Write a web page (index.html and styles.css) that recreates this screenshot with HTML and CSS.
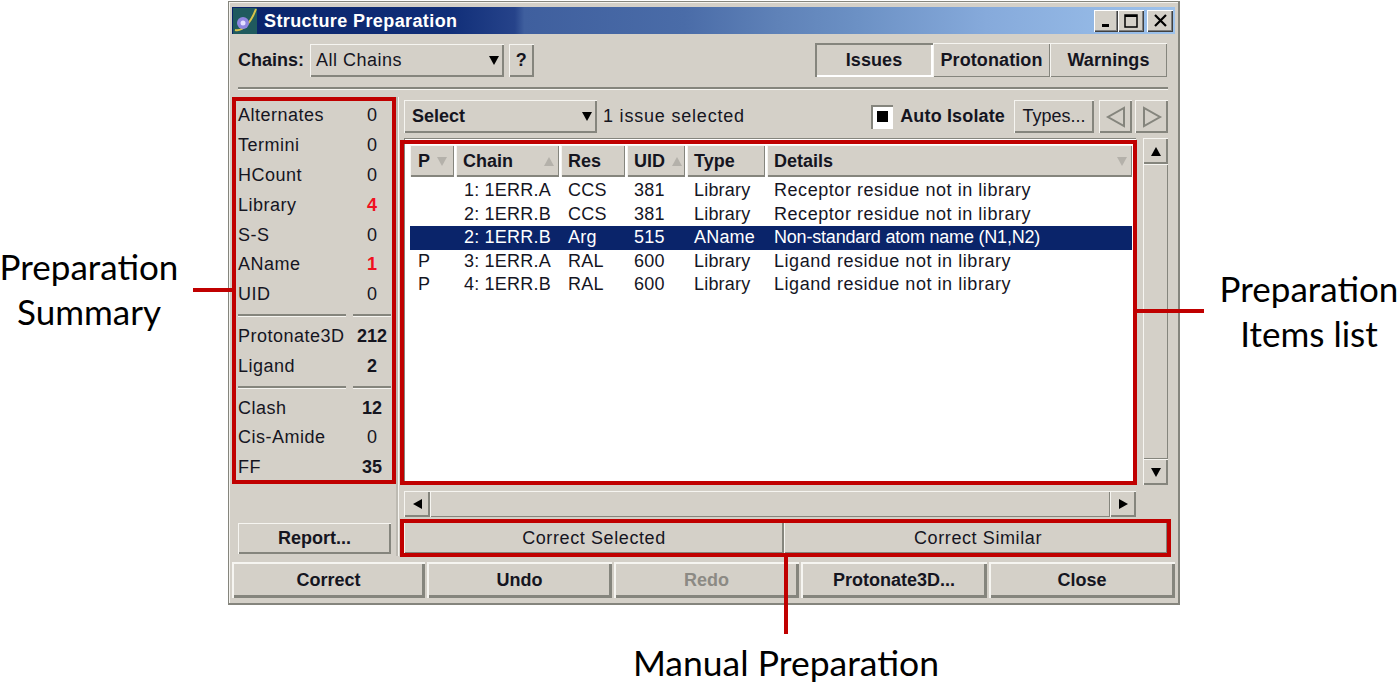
FILE: index.html
```html
<!DOCTYPE html>
<html lang="en">
<head>
  <meta charset="UTF-8">
  <title>Structure Preparation</title>
  <link rel="stylesheet" href="styles.css">
</head>
<body>
  <div class="page">
    <div class="window">
      <div class="titlebar">
        <svg class="app-icon" width="24" height="26" viewBox="0 0 24 26">
          <rect width="24" height="26" fill="#1f5a5e"/>
          <path d="M2 22 C10 24 18 14 23 1" stroke="#d9c24a" stroke-width="2" fill="none"/>
          <circle cx="10" cy="15" r="6" fill="#8f86e0"/>
          <circle cx="10" cy="15" r="2.5" fill="#e4e0ff"/>
        </svg>
        <span class="title">Structure Preparation</span>
        <div class="winbtns">
          <button class="winbtn"><svg width="13" height="13" viewBox="0 0 13 13"><rect x="2" y="10" width="7" height="3" fill="#000"/></svg></button>
          <button class="winbtn winbtn-max"><svg width="14" height="14" viewBox="0 0 14 14"><rect x="1" y="1" width="12" height="12" fill="none" stroke="#000" stroke-width="1.5"/><rect x="1" y="1" width="12" height="2" fill="#000"/></svg></button>
          <button class="winbtn winbtn-close"><svg width="13" height="13" viewBox="0 0 13 13"><path d="M1 1 L12 12 M12 1 L1 12" stroke="#000" stroke-width="2.2"/></svg></button>
        </div>
      </div>

      <div class="toprow">
        <span class="lbl-bold">Chains:</span>
        <div class="btn combo combo-chains"><span>All Chains</span><i class="arrow-down"></i></div>
        <button class="btn help">?</button>
        <div class="tabs">
          <button class="btn tab tab-on">Issues</button>
          <button class="btn tab">Protonation</button>
          <button class="btn tab">Warnings</button>
        </div>
      </div>
      <div class="sep sep-top"></div>

      <div class="main">
        <div class="left">
          <div class="summary">
            <div class="srow"><span>Alternates</span><span class="num">0</span></div>
            <div class="srow"><span>Termini</span><span class="num">0</span></div>
            <div class="srow"><span>HCount</span><span class="num">0</span></div>
            <div class="srow"><span>Library</span><span class="num red">4</span></div>
            <div class="srow"><span>S-S</span><span class="num">0</span></div>
            <div class="srow"><span>AName</span><span class="num red">1</span></div>
            <div class="srow"><span>UID</span><span class="num">0</span></div>
            <div class="ssep"><i></i><i></i></div>
            <div class="srow"><span>Protonate3D</span><span class="num strong">212</span></div>
            <div class="srow"><span>Ligand</span><span class="num strong">2</span></div>
            <div class="ssep"><i></i><i></i></div>
            <div class="srow"><span>Clash</span><span class="num strong">12</span></div>
            <div class="srow"><span>Cis-Amide</span><span class="num">0</span></div>
            <div class="srow"><span>FF</span><span class="num strong">35</span></div>
          </div>
          <button class="btn report">Report...</button>
        </div>

        <div class="vsep"></div>

        <div class="right">
          <div class="selrow">
            <div class="btn combo combo-select"><b>Select</b><i class="arrow-down"></i></div>
            <span class="selcount">1 issue selected</span>
            <span class="check"><i></i></span>
            <span class="lbl-bold auto">Auto Isolate</span>
            <button class="btn types">Types...</button>
            <button class="btn navbtn"><svg width="22" height="22" viewBox="0 0 22 22"><path d="M19 2 V20 L3 11 Z" fill="#d4d0c8" stroke="#85857d" stroke-width="2"/></svg></button>
            <button class="btn navbtn navbtn-next"><svg width="22" height="22" viewBox="0 0 22 22"><path d="M3 2 V20 L19 11 Z" fill="#d4d0c8" stroke="#85857d" stroke-width="2"/></svg></button>
          </div>

          <div class="tablerow">
            <div class="tablecol">
              <div class="tablebox">
                <div class="grid thead">
                  <div class="th">P<i class="sort sort-down"></i></div>
                  <div class="th">Chain<i class="sort sort-up sort-end"></i></div>
                  <div class="th">Res</div>
                  <div class="th">UID<i class="sort sort-up"></i></div>
                  <div class="th">Type</div>
                  <div class="th">Details<i class="sort sort-down sort-end"></i></div>
                </div>
                <div class="grid trow"><span></span><span>1: 1ERR.A</span><span>CCS</span><span>381</span><span>Library</span><span class="details">Receptor residue not in library</span></div>
                <div class="grid trow"><span></span><span>2: 1ERR.B</span><span>CCS</span><span>381</span><span>Library</span><span class="details">Receptor residue not in library</span></div>
                <div class="grid trow trow-sel"><span></span><span>2: 1ERR.B</span><span>Arg</span><span>515</span><span>AName</span><span class="details">Non-standard atom name (N1,N2)</span></div>
                <div class="grid trow"><span>P</span><span>3: 1ERR.A</span><span>RAL</span><span>600</span><span>Library</span><span class="details">Ligand residue not in library</span></div>
                <div class="grid trow"><span>P</span><span>4: 1ERR.B</span><span>RAL</span><span>600</span><span>Library</span><span class="details">Ligand residue not in library</span></div>
              </div>
              <div class="hscroll">
                <button class="btn sbtn"><i class="arrow-left"></i></button>
                <div class="strack"></div>
                <button class="btn sbtn"><i class="arrow-right"></i></button>
              </div>
            </div>
            <div class="vscroll">
              <button class="btn sbtn-v"><i class="arrow-up"></i></button>
              <div class="strack"></div>
              <button class="btn sbtn-v"><i class="arrow-down"></i></button>
            </div>
          </div>

          <div class="correctrow">
            <button class="btn plain">Correct Selected</button>
            <button class="btn plain plain-similar">Correct Similar</button>
          </div>
        </div>
      </div>

      <div class="footer">
        <button class="btn foot">Correct</button>
        <button class="btn foot">Undo</button>
        <button class="btn foot foot-off">Redo</button>
        <button class="btn foot">Protonate3D...</button>
        <button class="btn foot">Close</button>
      </div>
    </div>

    <!-- callouts over the screenshot -->
    <div class="redbox box-summary"></div>
    <div class="redbox box-items"></div>
    <div class="redbox box-manual"></div>
    <div class="redline line-summary"></div>
    <div class="redline line-items"></div>
    <div class="redline line-manual"></div>
    <div class="note note-summary">Preparation<br>Summary</div>
    <div class="note note-items">Preparation<br>Items list</div>
    <div class="note note-manual">Manual Preparation</div>
  </div>
</body>
</html>
```

FILE: styles.css
```css
* {
  box-sizing: border-box;
}

html, body {
  margin: 0;
  padding: 0;
  background-color: #fff;
}

body {
  font-family: "Liberation Sans", Arial, sans-serif;
  font-size: 18px;
  letter-spacing: 0.5px;
  color: #15151f;
}

b {
  letter-spacing: 0;
}

button {
  font-family: inherit;
  font-size: inherit;
  letter-spacing: inherit;
  color: inherit;
  padding: 0;
}

.page {
  position: relative;
  width: 1398px;
  height: 683px;
  overflow: hidden;
  padding-top: 1px;
}

.window {
  width: 952px;
  height: 604px;
  margin-left: 228px;
  padding: 5px 3px 5px 3px;
  background-color: #d4d0c8;
  border: 1px solid #85857d;
  border-bottom-width: 2px;
  border-right-width: 2px;
  box-shadow: inset 1px 1px 0 #f4f3ef;
  display: flex;
  flex-direction: column;
}

/* title bar */
.titlebar {
  height: 27px;
  flex: none;
  display: flex;
  align-items: center;
  background: linear-gradient(to right, #0a246a 0%, #102e78 23%, #26438a 30%, #3f5f9e 31%, #4a6ca8 48%, #5f82b8 58%, #6b90c4 66%, #86aadb 80%, #9dc2ec 100%);
}

.app-icon {
  flex: none;
  margin-left: 1px;
}

.title {
  margin-left: 7px;
  padding-top: 1px;
  font-weight: bold;
  letter-spacing: 0.4px;
  color: #fff;
}

.winbtns {
  margin-left: auto;
  margin-right: 2px;
  display: flex;
}

.winbtn {
  width: 24px;
  height: 22px;
  background-color: #d4d0c8;
  border: none;
  display: flex;
  align-items: center;
  justify-content: center;
  box-shadow: inset 1px 1px 0 #fff, inset -1px -1px 0 #404040, inset -2px -2px 0 #808080;
}

.winbtn-max {
  width: 26px;
}

.winbtn-close {
  margin-left: 3px;
  width: 26px;
}

/* generic raised button */
.btn {
  background-color: #d4d0c8;
  border: none;
  box-shadow: inset 1px 1px 0 #f6f5f1, inset -2px -2px 0 #85857d;
  display: flex;
  align-items: center;
  justify-content: center;
}

.lbl-bold {
  font-weight: bold;
  letter-spacing: 0;
}

/* chains row */
.toprow {
  height: 34px;
  flex: none;
  margin-top: 9px;
  padding: 0 8px 0 6px;
  display: flex;
  align-items: center;
}

.combo {
  justify-content: space-between;
  padding: 0 5px 0 6px;
}

.combo-chains {
  width: 194px;
  height: 33px;
  margin-left: 6px;
}

.help {
  width: 25px;
  height: 33px;
  margin-left: 5px;
  font-weight: bold;
}

.tabs {
  margin-left: auto;
  display: flex;
}

.tab {
  width: 117px;
  height: 34px;
  font-weight: bold;
  letter-spacing: 0.1px;
  box-shadow: inset 1px 1px 0 #f6f5f1, inset -1px -1px 0 #85857d;
}

.tab-on {
  width: 118px;
  box-shadow: inset 2px 2px 0 #85857d, inset -2px -2px 0 #fff;
}

.sep {
  height: 3px;
  background-color: #85857d;
  border-bottom: 1px solid #f6f5f1;
}

.sep-top {
  flex: none;
  margin: 10px 7px 0 6px;
}

/* main area */
.main {
  flex: none;
  height: 459px;
  margin-top: 7px;
  padding-left: 6px;
  display: flex;
}

.left {
  width: 153px;
  flex: none;
  padding-top: 4px;
  display: flex;
  flex-direction: column;
}

.srow {
  height: 29.8px;
  display: flex;
  align-items: center;
  justify-content: space-between;
}

.num {
  width: 38px;
  text-align: center;
  letter-spacing: 0;
}

.strong {
  font-weight: bold;
}

.red {
  color: #f01020;
  font-weight: bold;
}

.ssep {
  height: 12px;
  display: flex;
  align-items: center;
  justify-content: space-between;
}

.ssep i {
  display: block;
  width: 108px;
  height: 3px;
  background-color: #85857d;
  border-bottom: 1px solid #f6f5f1;
}

.ssep i + i {
  width: 38px;
}

.report {
  height: 31px;
  margin-top: auto;
  margin-bottom: 2px;
  font-weight: bold;
  letter-spacing: 0;
}

.vsep {
  width: 3px;
  flex: none;
  margin: 0 5px 0 5px;
  background-color: #bdbab2;
  border-right: 1px solid #f6f5f1;
}

.right {
  flex: 1;
  min-width: 0;
  padding-right: 7px;
  padding-top: 3px;
  display: flex;
  flex-direction: column;
}

.selrow {
  height: 33px;
  flex: none;
  display: flex;
  align-items: center;
}

.combo-select {
  width: 193px;
  height: 33px;
  padding-left: 8px;
}

.selcount {
  margin-left: 6px;
  letter-spacing: 0.8px;
}

.check {
  margin-left: auto;
  width: 22px;
  height: 24px;
  background-color: #fff;
  box-shadow: inset 2px 2px 0 #85857d;
  display: flex;
  align-items: center;
  justify-content: center;
  margin-right: 7px;
}

.check i {
  width: 11px;
  height: 11px;
  background-color: #000;
}

.auto {
  letter-spacing: 0.15px;
}

.types {
  width: 80px;
  height: 33px;
  margin-left: 9px;
  letter-spacing: 0;
}

.navbtn {
  width: 33px;
  height: 33px;
  margin-left: 5px;
}

.navbtn-next {
  margin-left: 3px;
}

.tablerow {
  flex: none;
  height: 379px;
  margin-top: 5px;
  display: flex;
  gap: 7px;
}

.tablecol {
  width: 732px;
  flex: none;
  display: flex;
  flex-direction: column;
}

.tablebox {
  height: 347px;
  flex: none;
  background-color: #fff;
  padding: 7px 4px 0 6px;
  box-shadow: inset 1px 1px 0 #85857d;
}

.grid {
  display: grid;
  grid-template-columns: 46px 105px 66px 60px 80px 1fr;
}

.thead {
  height: 32px;
  margin-bottom: 2px;
}

.th {
  position: relative;
  padding-left: 7px;
  font-weight: bold;
  letter-spacing: 0;
  display: flex;
  align-items: center;
  margin-right: 2px;
  background-color: #d4d0c8;
  box-shadow: inset 1px 1px 0 #f6f5f1, inset -1px -2px 0 #85857d;
}

.th:first-child {
  padding-left: 8px;
}

.th:last-child {
  margin-right: 0;
}

.sort {
  width: 0;
  height: 0;
  margin-left: 7px;
  border-left: 5px solid transparent;
  border-right: 5px solid transparent;
}

.sort-down {
  border-top: 9px solid #b4b1aa;
}

.sort-up {
  border-bottom: 9px solid #b4b1aa;
}

.sort-end {
  margin-left: auto;
  margin-right: 5px;
}

.trow {
  height: 23.5px;
  align-items: center;
  letter-spacing: 0.2px;
}

.trow span {
  padding-left: 7px;
}

.trow span:nth-child(-n+2) {
  padding-left: 8px;
}

.trow .details {
  letter-spacing: 0.55px;
}

.trow-sel {
  background-color: #0a246a;
  color: #fff;
}

.trow-sel .details {
  letter-spacing: -0.2px;
}

/* scroll bars */
.hscroll {
  height: 26px;
  flex: none;
  margin-top: 6px;
  display: flex;
  box-shadow: inset 1px 1px 0 #85857d, inset -1px -1px 0 #85857d;
}

.strack {
  flex: 1;
  background-color: #d4d0c8;
  box-shadow: inset 1px 1px 0 #f6f5f1, inset -1px -1px 0 #85857d;
}

.sbtn {
  width: 26px;
  flex: none;
}

.vscroll {
  width: 25px;
  height: 347px;
  flex: none;
  display: flex;
  flex-direction: column;
}

.sbtn-v {
  height: 26px;
  flex: none;
}

.arrow-down, .arrow-up, .arrow-left, .arrow-right {
  display: block;
  width: 0;
  height: 0;
}

.arrow-down {
  border-left: 5px solid transparent;
  border-right: 5px solid transparent;
  border-top: 9px solid #000;
}

.arrow-up {
  border-left: 5px solid transparent;
  border-right: 5px solid transparent;
  border-bottom: 9px solid #000;
}

.arrow-left {
  border-top: 5px solid transparent;
  border-bottom: 5px solid transparent;
  border-right: 9px solid #000;
}

.arrow-right {
  border-top: 5px solid transparent;
  border-bottom: 5px solid transparent;
  border-left: 9px solid #000;
}

.correctrow {
  height: 32px;
  flex: none;
  margin-top: 5px;
  display: flex;
}

.plain {
  flex: 1 1 0;
  letter-spacing: 0.6px;
}

.plain-similar {
  padding-left: 4px;
}

/* bottom buttons */
.footer {
  flex: none;
  height: 36px;
  margin-top: 6px;
  display: grid;
  grid-template-columns: 193px 185px 185px 186px 186px;
  gap: 2px;
}

.foot {
  font-weight: bold;
  letter-spacing: 0;
  box-shadow: inset 2px 2px 0 #f6f5f1, inset -3px -3px 0 #85857d;
}

.foot-off {
  color: #8c8a84;
}

/* callouts */
.redbox {
  position: absolute;
  border: 4px solid #c00000;
}

.box-summary {
  left: 232px;
  top: 97px;
  width: 164px;
  height: 387px;
}

.box-items {
  left: 400px;
  top: 140px;
  width: 737px;
  height: 345px;
}

.box-manual {
  left: 400px;
  top: 519px;
  width: 771px;
  height: 38px;
}

.redline {
  position: absolute;
  background-color: #c00000;
}

.line-summary {
  left: 193px;
  top: 288px;
  width: 40px;
  height: 4px;
}

.line-items {
  left: 1136px;
  top: 309px;
  width: 68px;
  height: 4px;
}

.line-manual {
  left: 784px;
  top: 556px;
  width: 4px;
  height: 78px;
}

.note {
  position: absolute;
  font-family: Lato, "Open Sans", sans-serif;
  font-size: 35px;
  letter-spacing: 0;
  line-height: 45px;
  color: #000;
  text-align: center;
  white-space: nowrap;
}

.note-summary {
  left: -1px;
  top: 244px;
  width: 180px;
}

.note-items {
  left: 1219px;
  top: 266px;
  width: 180px;
}

.note-manual {
  left: 586px;
  top: 643px;
  width: 400px;
  font-size: 35.5px;
  line-height: 39px;
}
```
